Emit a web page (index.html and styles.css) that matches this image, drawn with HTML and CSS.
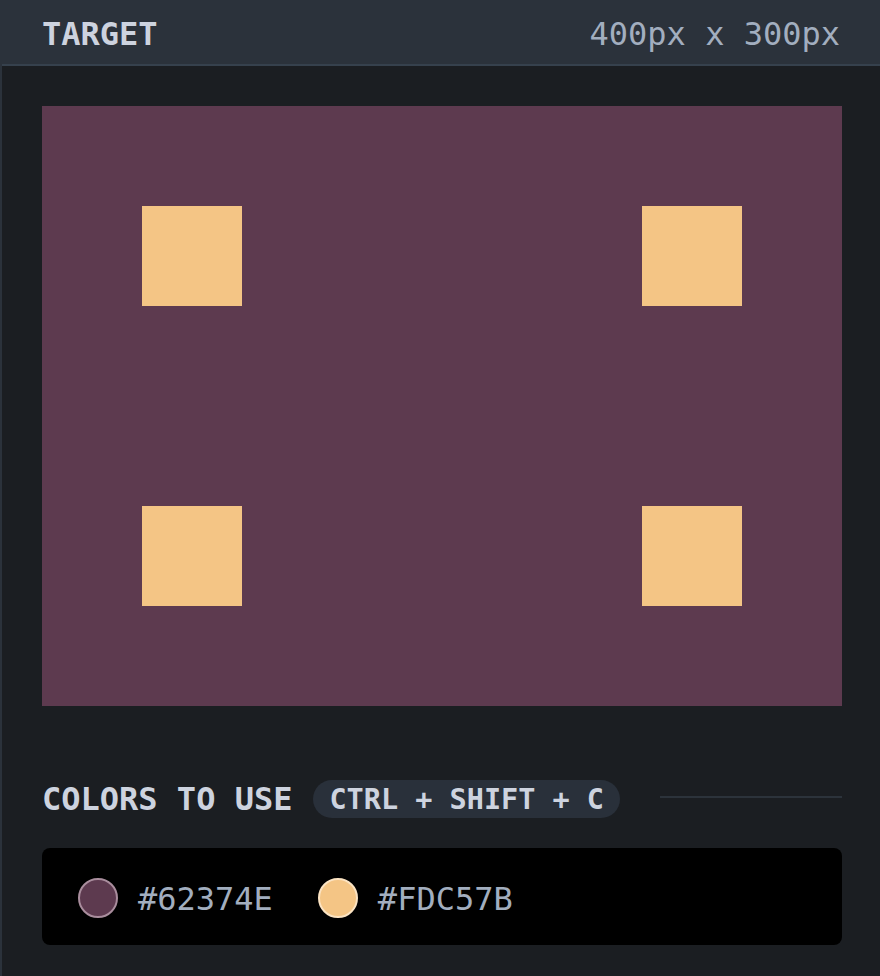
FILE: index.html
```html
<!DOCTYPE html>
<html>
<head>
<meta charset="utf-8">
<link rel="stylesheet" href="styles.css">
</head>
<body>
<header class="header">
  <h1 class="title">TARGET</h1>
  <span class="size">400px x 300px</span>
</header>
<main class="main">
  <div class="canvas">
    <div class="square"></div>
    <div class="square"></div>
    <div class="square"></div>
    <div class="square"></div>
  </div>
  <div class="colors-head">
    <h2 class="title">COLORS TO USE</h2>
    <span class="shortcut">CTRL + SHIFT + C</span>
    <span class="rule"></span>
  </div>
  <div class="swatches">
    <div class="swatch">
      <span class="dot dot-plum"></span>
      <span class="hex">#62374E</span>
    </div>
    <div class="swatch">
      <span class="dot dot-peach"></span>
      <span class="hex">#FDC57B</span>
    </div>
  </div>
</main>
</body>
</html>
```
FILE: styles.css
```css
html, body {
  margin: 0;
  padding: 0;
}
body {
  background: #2b323b;
  font-family: "DejaVu Sans Mono", "Liberation Mono", monospace;
  height: 976px;
  overflow: hidden;
  display: flex;
  flex-direction: column;
}
.header {
  height: 64px;
  box-sizing: border-box;
  padding: 4px 40px 0 42px;
  display: flex;
  align-items: center;
  justify-content: space-between;
  flex: none;
}
.title {
  margin: 0;
  font-size: 32px;
  font-weight: bold;
  color: #cdd3df;
  line-height: 1;
}
.size {
  font-size: 32px;
  color: #a2aebf;
  line-height: 1;
}
.main {
  flex: 1;
  margin-left: 2px;
  border-top: 2px solid #36414d;
  background: #1b1e22;
  padding: 40px 38px 0 40px;
}
.canvas {
  width: 800px;
  height: 600px;
  box-sizing: border-box;
  background: #5d3a4f;
  padding: 100px;
  display: grid;
  grid-template-columns: 100px 100px;
  grid-template-rows: 100px 100px;
  justify-content: space-between;
  align-content: space-between;
}
.square {
  background: #f4c585;
}
.colors-head {
  margin-top: 74px;
  height: 38px;
  display: flex;
  align-items: center;
}
.shortcut {
  margin-left: 21px;
  height: 38px;
  box-sizing: border-box;
  padding: 0 16px;
  border-radius: 19px;
  background: #29303a;
  color: #cdd3df;
  font-size: 28.5px;
  font-weight: bold;
  display: flex;
  align-items: center;
}
.rule {
  flex: 1;
  height: 2px;
  margin-left: 40px;
  margin-bottom: 4px;
  background: #2c333b;
}
.swatches {
  margin-top: 30px;
  height: 97px;
  box-sizing: border-box;
  background: #000;
  border-radius: 8px;
  display: flex;
  align-items: center;
  padding: 2px 36px 0;
  gap: 45px;
}
.swatch {
  display: flex;
  align-items: center;
  gap: 20px;
}
.dot {
  width: 40px;
  height: 40px;
  box-sizing: border-box;
  border-radius: 50%;
  border: 2px solid;
}
.dot-plum {
  background: #5d3a4f;
  border-color: #a98d9d;
}
.dot-peach {
  background: #f4c585;
  border-color: #fbe3c2;
}
.hex {
  font-size: 32px;
  color: #a2aebf;
  line-height: 1;
  padding-top: 2px;
}
```
